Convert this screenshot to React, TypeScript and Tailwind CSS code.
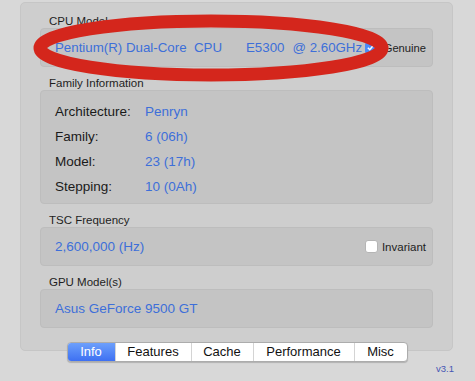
import React from 'react';

const GroupTitle: React.FC<{ text: string; className?: string }> = ({ text, className }) => (
  <div className={`h-[14px] pl-[9px] text-[11.5px] leading-[14px] text-[#1e1e1e] ${className ?? ''}`}>{text}</div>
);

const rows = [
  { label: 'Architecture:', value: 'Penryn' },
  { label: 'Family:', value: '6 (06h)' },
  { label: 'Model:', value: '23 (17h)' },
  { label: 'Stepping:', value: '10 (0Ah)' },
];

const tabs = [
  { name: 'Info', w: 'w-[47px]' },
  { name: 'Features', w: 'w-[76px]' },
  { name: 'Cache', w: 'w-[62px]' },
  { name: 'Performance', w: 'w-[101px]' },
  { name: 'Misc', w: 'w-[53px]' },
];

const box = 'rounded-[4px] bg-[#c4c4c4] border border-[#bdbdbd]';

export default function App() {
  return (
    <div className="relative w-[475px] h-[381px] overflow-hidden bg-[#d8d8d8] font-['Liberation_Sans',Arial,sans-serif]">
      <div className="pt-[2px] pl-[20px]">
        <div className="w-[433px] h-[349px] rounded-[5px] bg-[#cecece] border border-[#c6c6c6] px-[19px]">
          {/* CPU model */}
          <GroupTitle text="CPU Model" className="mt-[11px]" />
          <div className={`${box} h-[39px] flex items-center justify-between pl-[14px] pr-[6px]`}>
            <div className="whitespace-pre text-[13.3px] leading-[16px] text-[#3d6fd9]">
              <span>Pentium(R) Dual-Core  CPU</span>
              <span className="ml-[24px]">E5300</span>
              <span className="ml-[8px]">@ 2.60GHz</span>
            </div>
            <div className="flex items-center">
              <span className="w-[12px] h-[12px] rounded-[3px] bg-[#4b8cf8] flex items-center justify-center">
                <svg width="9" height="9" viewBox="0 0 10 10">
                  <path d="M2 5.2 L4.2 7.5 L8.2 2.5" fill="none" stroke="#fff" strokeWidth="1.6" />
                </svg>
              </span>
              <span className="ml-[7px] text-[11.2px] leading-[14px] text-[#1e1e1e]">Genuine</span>
            </div>
          </div>

          {/* Family information */}
          <GroupTitle text="Family Information" className="mt-[9px]" />
          <div className={`${box} h-[114px] pt-[8px] pl-[14px]`}>
            {rows.map((r) => (
              <div key={r.label} className="flex h-[25px] items-center text-[13.5px] leading-[16px]">
                <span className="w-[90px] text-[#1a1a1a]">{r.label}</span>
                <span className="text-[#3d6fd9]">{r.value}</span>
              </div>
            ))}
          </div>

          {/* TSC frequency */}
          <GroupTitle text="TSC Frequency" className="mt-[9px]" />
          <div className={`${box} h-[39px] flex items-center justify-between pl-[14px] pr-[6px]`}>
            <span className="text-[13.5px] leading-[16px] text-[#3d6fd9]">2,600,000 (Hz)</span>
            <div className="flex items-center">
              <span className="w-[13px] h-[13px] rounded-[3px] bg-white border border-[#b5b5b5]" />
              <span className="ml-[4px] text-[11.5px] leading-[14px] text-[#1e1e1e]">Invariant</span>
            </div>
          </div>

          {/* GPU */}
          <GroupTitle text="GPU Model(s)" className="mt-[9px]" />
          <div className={`${box} h-[39px] flex items-center pl-[14px]`}>
            <span className="text-[13.5px] leading-[16px] text-[#3d6fd9]">Asus GeForce 9500 GT</span>
          </div>
        </div>
      </div>

      {/* Tabs */}
      <div className="-mt-[9px] flex justify-center">
        <div className="flex h-[20px] ml-[-1px] rounded-[4px] border border-[#acacac] bg-white shadow-[0_1px_1px_rgba(0,0,0,0.18)] overflow-hidden">
          {tabs.map((t, i) => (
            <div
              key={t.name}
              className={`${t.w} flex items-center justify-center text-[13px] leading-[16px] ${
                i === 0
                  ? 'bg-gradient-to-b from-[#6d9ffb] to-[#3e70f2] text-white'
                  : 'text-[#111] border-l border-[#d4d4d4]'
              }`}
            >
              {t.name}
            </div>
          ))}
        </div>
      </div>

      <div className="mt-[1px] flex justify-end pr-[21px] text-[9.5px] leading-[12px] text-[#4656b4]">v3.1</div>

      {/* red marker annotation */}
      <svg className="absolute inset-0 pointer-events-none" width="475" height="381">
        <ellipse cx="211" cy="48" rx="171" ry="27" fill="none" stroke="#d4261c" strokeWidth="13" />
      </svg>
    </div>
  );
}
